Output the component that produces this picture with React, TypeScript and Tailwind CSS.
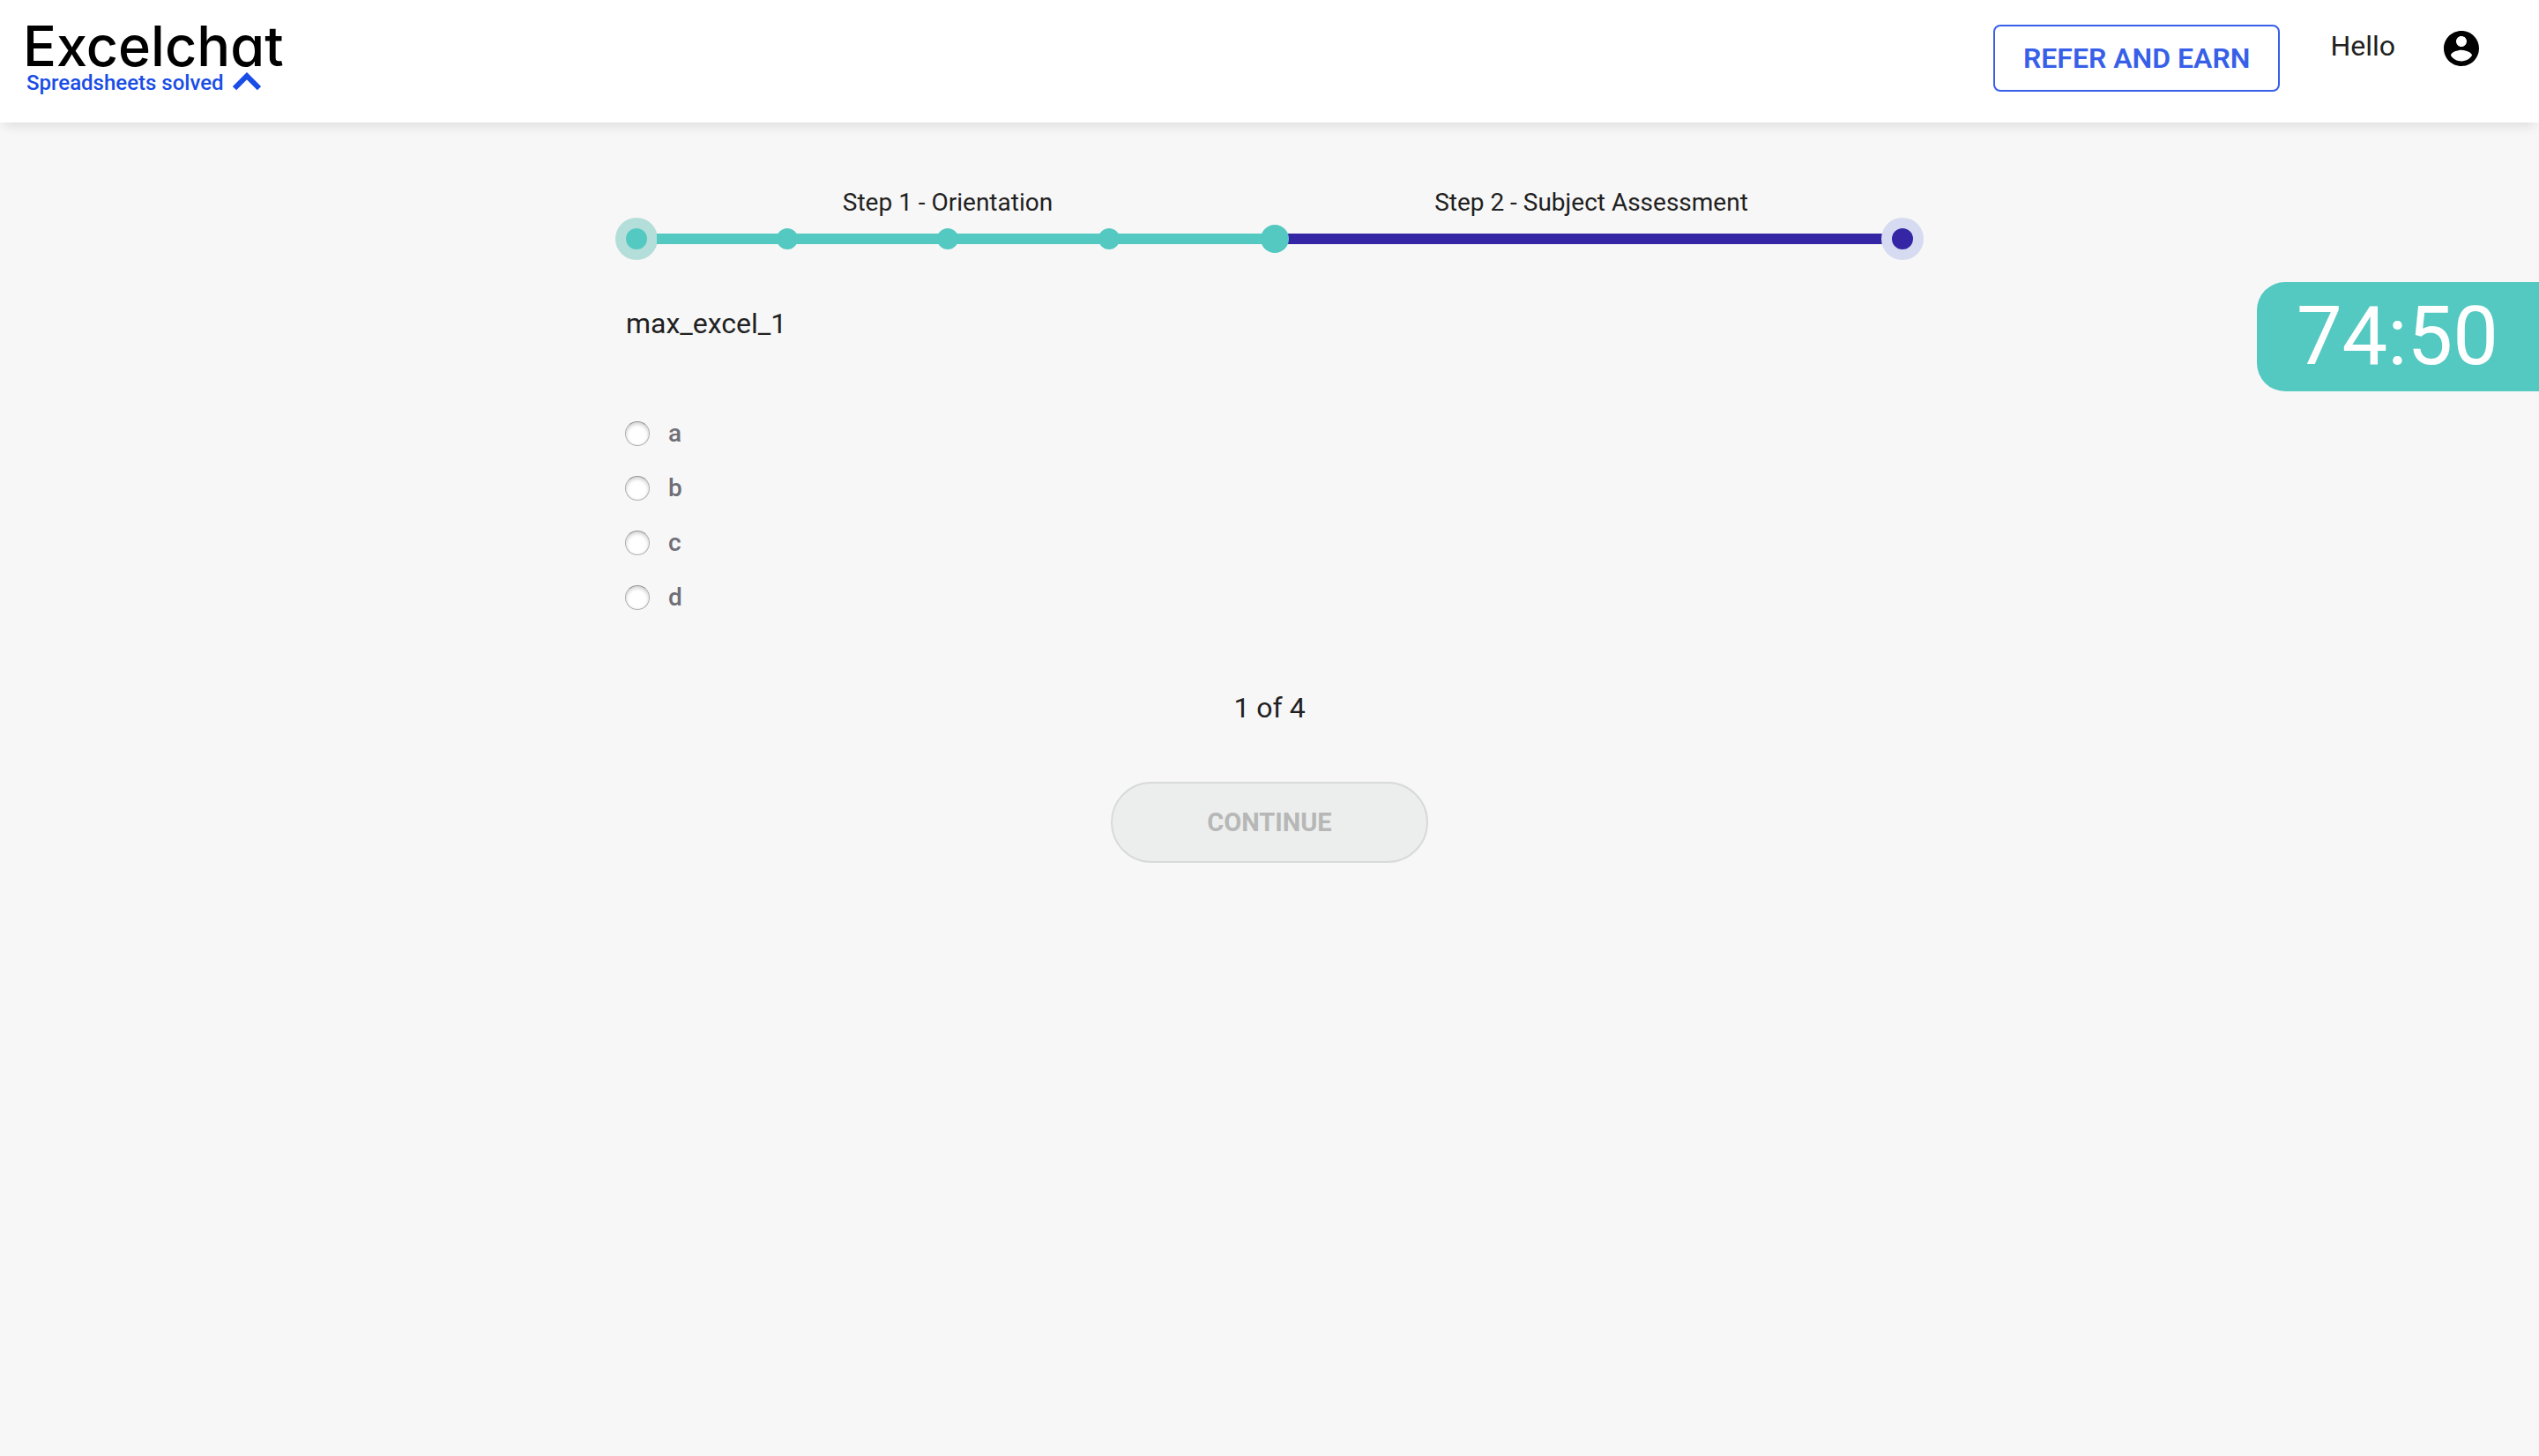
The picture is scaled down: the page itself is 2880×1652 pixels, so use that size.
const answers = ['a', 'b', 'c', 'd'];

function Logo() {
  return (
    <a href="#" aria-label="Excelchat home" className="block">
      <span className="block font-['Inter',sans-serif] text-[63px] leading-[48px] font-medium text-black [font-feature-settings:'cv11']">
        Excelchat
      </span>
      <span className="mt-1 flex items-start gap-2 pl-1 text-2xl leading-7 font-medium text-[#184de6]">
        Spreadsheets solved
        <svg viewBox="0 0 32 21" className="mt-[2px] ml-0.5 h-[21px] w-8" fill="none" aria-hidden="true">
          <path d="M2 18.2 16 4.2l14 14" stroke="currentColor" strokeWidth="6" />
        </svg>
      </span>
    </a>
  );
}

function Header() {
  return (
    <header className="flex items-start justify-between bg-white pt-7 pr-16 pb-[31px] pl-[26px] shadow-[0_8px_12px_-4px_rgba(0,0,0,0.1)]">
      <Logo />
      <div className="flex items-start">
        <button
          type="button"
          className="h-19 rounded-lg border-2 border-[#375fe8] px-8 text-[32px] leading-10 font-semibold text-[#375fe8]"
        >
          REFER AND EARN
        </button>
        <span className="mt-1 ml-[57px] text-[32px] leading-10">Hello</span>
        <button type="button" aria-label="Account" className="mt-[3px] ml-[51px] text-black">
          <svg viewBox="0 0 24 24" className="size-12" fill="currentColor" aria-hidden="true">
            <path d="M12 2C6.48 2 2 6.48 2 12s4.48 10 10 10 10-4.48 10-10S17.52 2 12 2zm0 3c1.66 0 3 1.34 3 3s-1.34 3-3 3-3-1.34-3-3 1.34-3 3-3zm0 14.2c-2.5 0-4.71-1.28-6-3.22.03-1.99 4-3.08 6-3.08 1.99 0 5.97 1.09 6 3.08-1.29 1.94-3.5 3.22-6 3.22z" />
          </svg>
        </button>
      </div>
    </header>
  );
}

function Dot() {
  return <span className="-mx-1 size-6 shrink-0 rounded-full bg-[#54c9c1]" />;
}

function Progress() {
  return (
    <div>
      <div className="grid grid-cols-2 px-3 text-center text-[28px] leading-[34px]">
        <span>Step 1 - Orientation</span>
        <span>Step 2 - Subject Assessment</span>
      </div>
      <div className="flex items-center">
        <span className="-mr-px flex size-12 shrink-0 items-center justify-center rounded-full bg-[#b4deda]">
          <Dot />
        </span>
        <span className="h-3 flex-[140] bg-[#54c9c1]" />
        <Dot />
        <span className="h-3 flex-[166] bg-[#54c9c1]" />
        <Dot />
        <span className="h-3 flex-[167] bg-[#54c9c1]" />
        <Dot />
        <span className="h-3 flex-[168] bg-[#54c9c1]" />
        <span className="z-10 -mx-1 size-8 shrink-0 rounded-full bg-[#54c9c1]" />
        <span className="h-3 flex-[677] bg-[#3426a5]" />
        <span className="-ml-px flex size-12 shrink-0 items-center justify-center rounded-full bg-[#d6dbf1]">
          <span className="size-6 rounded-full bg-[#3426a5]" />
        </span>
      </div>
    </div>
  );
}

export default function App() {
  return (
    <div className="min-h-screen bg-[#f7f7f7] font-['Roboto',sans-serif] text-[#212121]">
      <Header />
      <main className="mx-auto max-w-[1484px] pt-[74px]">
        <Progress />
        <form className="mt-[52px]">
          <fieldset className="px-[11px]">
            <legend className="px-px text-[32px] leading-10">max_excel_1</legend>
            <div className="mt-[74px]">
              {answers.map((answer) => (
                <label
                  key={answer}
                  className="flex h-[62px] items-center gap-[21px] text-[28px] leading-8 font-medium text-[#6f6f77]"
                >
                  <input
                    type="radio"
                    name="answer"
                    value={answer}
                    className="size-7 appearance-none rounded-full border border-[#b0b0b0] border-t-[#949494] bg-white shadow-[inset_0_2px_4px_rgba(0,0,0,0.2)] checked:border-8 checked:border-[#54c9c1]"
                  />
                  {answer}
                </label>
              ))}
            </div>
          </fieldset>
          <p className="mt-[74px] text-center text-[32px] leading-10">1 of 4</p>
          <div className="mt-16 flex justify-center">
            <button
              type="submit"
              disabled
              className="h-[92px] w-[360px] rounded-full border-2 border-[#d8dad9] bg-[#eceeed] text-[29px] leading-8 font-bold text-[#b7b7b7]"
            >
              CONTINUE
            </button>
          </div>
        </form>
      </main>
      <div
        role="timer"
        className="fixed top-80 right-0 rounded-l-[32px] bg-[#54c9c1] pr-[46px] pl-[45px] text-[92px] leading-[124px] text-white"
      >
        74:50
      </div>
    </div>
  );
}
